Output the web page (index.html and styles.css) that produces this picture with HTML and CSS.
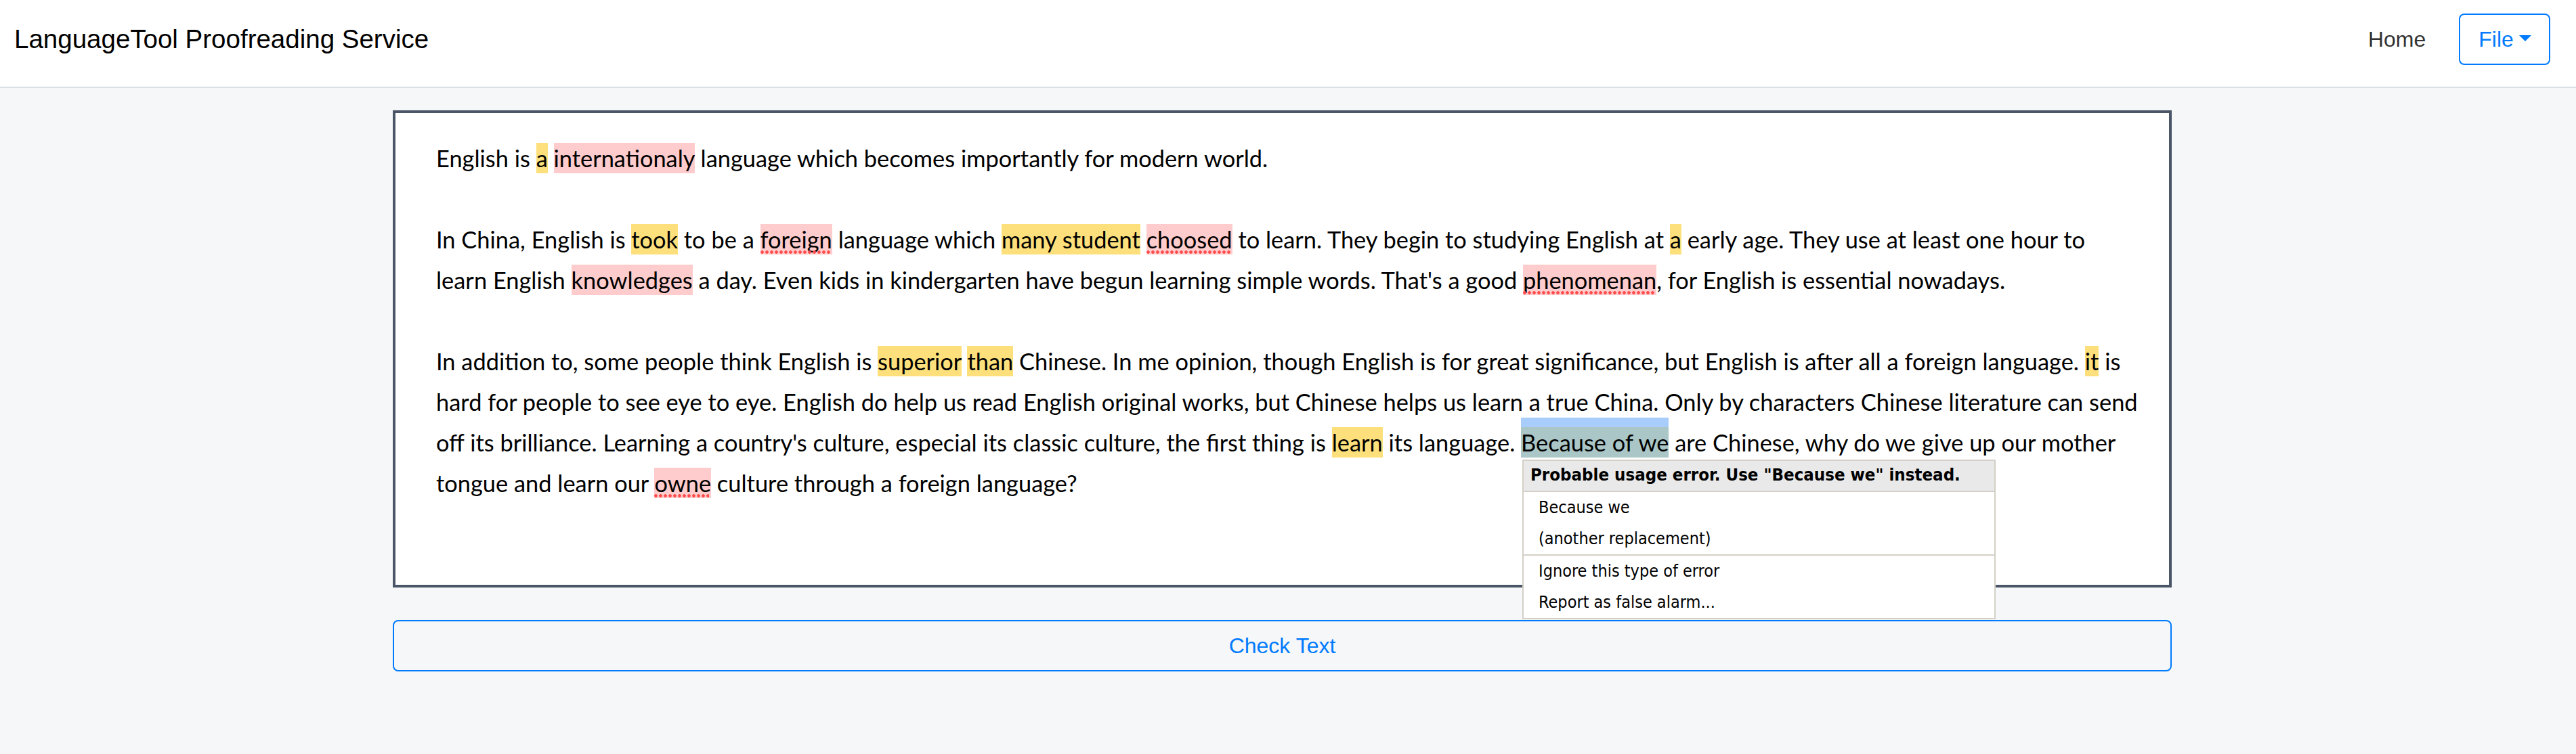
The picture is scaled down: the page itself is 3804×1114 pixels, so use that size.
FILE: index.html
```html
<!DOCTYPE html>
<html lang="en">
<head>
<meta charset="utf-8">
<title>LanguageTool Proofreading Service</title>
<link rel="stylesheet" href="styles.css">
</head>
<body>
<nav class="navbar">
  <span class="brand">LanguageTool Proofreading Service</span>
  <div class="nav-right">
    <a class="nav-link" href="#">Home</a>
    <button class="btn-file" type="button">File</button>
  </div>
</nav>
<main class="main">
  <div class="editor">
    <div class="para">English is <span class="hl y">a</span> <span class="hl r">internationaly</span> language which becomes importantly for modern world.</div>
    <div class="para">In China, English is <span class="hl y">took</span> to be a <span class="hl r sp">foreign</span> language which <span class="hl y">many student</span> <span class="hl r sp">choosed</span> to learn. They begin to studying English at <span class="hl y">a</span> early age. They use at least one hour to<br>learn English <span class="hl r">knowledges</span> a day. Even kids in kindergarten have begun learning simple words. That's a good <span class="hl r sp">phenomenan</span>, for English is essential nowadays.</div>
    <div class="para">In addition to, some people think English is <span class="hl y">superior</span> <span class="hl y">than</span> Chinese. In me opinion, though English is for great significance, but English is after all a foreign language. <span class="hl y">it</span> is<br>hard for people to see eye to eye. English do help us read English original works, but Chinese helps us learn a true China. Only by characters Chinese literature can send<br>off its brilliance. Learning a country's culture, especial its classic culture, the first thing is <span class="hl y">learn</span> its language. <span class="hl sel">Because of we</span> are Chinese, why do we give up our mother<br>tongue and learn our <span class="hl r sp">owne</span> culture through a foreign language?</div>
  </div>
  <div class="popup">
    <div class="popup-head">Probable usage error. Use "Because we" instead.</div>
    <div class="popup-group">
      <div class="popup-item">Because we</div>
      <div class="popup-item">(another replacement)</div>
    </div>
    <div class="popup-group">
      <div class="popup-item">Ignore this type of error</div>
      <div class="popup-item">Report as false alarm...</div>
    </div>
  </div>
  <button class="btn-check" type="button">Check Text</button>
</main>
</body>
</html>
```
FILE: styles.css
```css
* { box-sizing: border-box; }
html, body { margin: 0; }
body {
  background: #f6f7f9;
  font-family: "Liberation Sans", Arial, sans-serif;
  color: #212529;
}
.navbar {
  height: 130px;
  background: #fff;
  border-bottom: 2px solid #dadfe4;
  display: flex;
  align-items: center;
  justify-content: space-between;
  padding: 0 38px 12px 21px;
}
.brand {
  font-size: 38.5px;
  line-height: 38px;
  color: #000;
}
.nav-right {
  display: flex;
  align-items: center;
  gap: 49px;
}
.nav-link {
  font-size: 32px;
  line-height: 32px;
  color: #333;
  text-decoration: none;
}
.btn-file {
  height: 76px;
  padding: 0 26px 0 27px;
  border: 2px solid #007bff;
  border-radius: 8px;
  background: #fff;
  color: #007bff;
  font-family: "Liberation Sans", Arial, sans-serif;
  font-size: 32px;
  line-height: 48px;
}
.btn-file::after {
  content: "";
  display: inline-block;
  margin-left: 0.255em;
  vertical-align: 0.255em;
  border-top: 0.3em solid;
  border-right: 0.3em solid transparent;
  border-left: 0.3em solid transparent;
}
.main {
  position: relative;
  width: 2627px;
  margin: 33px 0 0 580px;
}
.editor {
  height: 705px;
  background: #fff;
  border: 4px solid #4a5568;
  padding: 37px 60px 0 60px;
  font-family: Lato, "Open Sans", sans-serif;
  font-size: 34.4px;
  line-height: 60px;
  color: #000;
  white-space: nowrap;
}
.para + .para { margin-top: 60px; }
.hl { padding: 2.4px 0; }
.y { background: #fde07b; }
.r { background: #fecccc; }
.sel { background: #aac6c6; position: relative; }
.sel::before {
  content: "";
  position: absolute;
  left: 0;
  right: 0;
  top: -14px;
  height: 14px;
  background: #a8cdfa;
}
.sp { position: relative; }
.sp::after {
  content: "";
  position: absolute;
  left: 0;
  right: 3px;
  bottom: 1px;
  height: 5px;
  background: radial-gradient(circle at 2.5px 2.5px, #ff4d4d 2px, transparent 2.6px) 0 0 / 7px 5px repeat-x;
}
.popup {
  position: absolute;
  left: 1668px;
  top: 516px;
  width: 699px;
  background: #fff;
  border: 2px solid #d4d0c8;
  font-family: "DejaVu Sans Condensed", "DejaVu Sans", sans-serif;
  font-size: 25px;
  color: #000;
}
.popup-head {
  height: 46px;
  background: #e9e9e9;
  border-bottom: 2px solid #d4d0c8;
  font-weight: bold;
  font-size: 25.6px;
  line-height: 41px;
  padding: 0 10px;
  white-space: nowrap;
}
.popup-group + .popup-group { border-top: 2px solid #d4d0c8; }
.popup-item {
  height: 46px;
  line-height: 46px;
  padding-left: 22px;
}
.btn-check {
  display: block;
  width: 100%;
  height: 76px;
  margin-top: 48px;
  border: 2px solid #007bff;
  border-radius: 8px;
  background: transparent;
  color: #007bff;
  font-family: "Liberation Sans", Arial, sans-serif;
  font-size: 32px;
}
```
